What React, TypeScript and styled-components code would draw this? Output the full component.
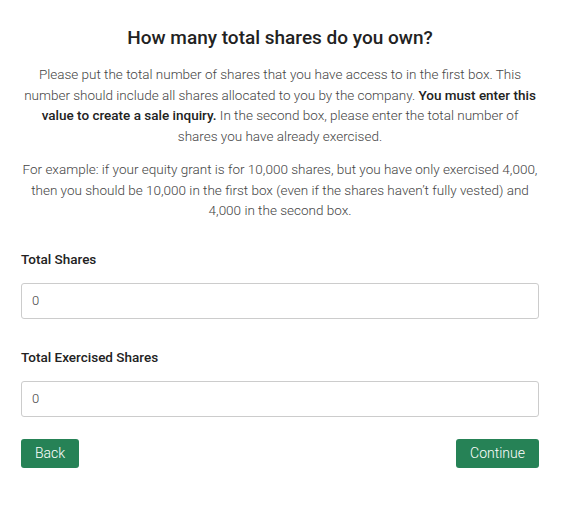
import React, { useState } from 'react';
import styled, { createGlobalStyle } from 'styled-components';

const GlobalStyle = createGlobalStyle`
  html, body {
    margin: 0;
    padding: 0;
    background: #ffffff;
  }
  body {
    font-family: Roboto, 'Liberation Sans', sans-serif;
    color: #333333;
  }
  * {
    box-sizing: border-box;
  }
`;

const App: React.FC = () => {
  const [totalShares, setTotalShares] = useState('0');
  const [exercisedShares, setExercisedShares] = useState('0');

  return (
    <>
      <GlobalStyle />
      <S.Page>
        <S.Title>How many total shares do you own?</S.Title>
        <S.Intro>
          <S.Paragraph>
            Please put the total number of shares that you have access to in the first box. This
            number should include all shares allocated to you by the company.{' '}
            <strong>You must enter this value to create a sale inquiry.</strong> In the second box,
            please enter the total number of shares you have already exercised.
          </S.Paragraph>
          <S.Paragraph>
            For example: if your equity grant is for 10,000 shares, but you have only exercised
            4,000, then you should be 10,000 in the first box (even if the shares haven’t fully
            vested) and 4,000 in the second box.
          </S.Paragraph>
        </S.Intro>

        <S.Form>
          <S.Field>
            <S.Label>Total Shares</S.Label>
            <S.Input value={totalShares} onChange={(e) => setTotalShares(e.target.value)} />
          </S.Field>

          <S.Field>
            <S.Label>Total Exercised Shares</S.Label>
            <S.Input
              value={exercisedShares}
              onChange={(e) => setExercisedShares(e.target.value)}
            />
          </S.Field>
        </S.Form>

        <S.Actions>
          <S.Button type="button">Back</S.Button>
          <S.Button type="button">Continue</S.Button>
        </S.Actions>
      </S.Page>
    </>
  );
};

export default App;

const S = {
  Page: styled.div`
    width: 565px;
    padding: 25px 26px 0 21px;
    display: flex;
    flex-direction: column;
  `,

  Title: styled.h1`
    margin: 0 0 13px;
    font-size: 19px;
    font-weight: 500;
    line-height: 26px;
    text-align: center;
    color: #222222;
  `,

  Intro: styled.div`
    display: flex;
    flex-direction: column;
    gap: 13px;
  `,

  Paragraph: styled.p`
    margin: 0;
    font-size: 13.5px;
    font-weight: 300;
    line-height: 20.5px;
    text-align: center;
    color: #444444;

    strong {
      font-weight: 500;
      color: #222222;
    }
  `,

  Form: styled.div`
    display: flex;
    flex-direction: column;
    gap: 29px;
    margin-top: 29px;
  `,

  Field: styled.div`
    display: flex;
    flex-direction: column;
  `,

  Label: styled.label`
    font-size: 13.5px;
    font-weight: 500;
    line-height: 18px;
    color: #222222;
    margin-bottom: 15px;
  `,

  Input: styled.input`
    width: 100%;
    height: 36px;
    padding: 0 10px;
    border: 1px solid #cccccc;
    border-radius: 3px;
    font-family: Roboto, 'Liberation Sans', sans-serif;
    font-size: 13px;
    font-weight: 300;
    color: #444444;
    outline: none;
  `,

  Actions: styled.div`
    display: flex;
    justify-content: space-between;
    margin-top: 22px;
  `,

  Button: styled.button`
    height: 29px;
    padding: 0 14px;
    border: none;
    border-radius: 3px;
    background: #268256;
    color: #ffffff;
    font-family: Roboto, 'Liberation Sans', sans-serif;
    font-size: 14px;
    font-weight: 300;
    cursor: pointer;
  `,
};
